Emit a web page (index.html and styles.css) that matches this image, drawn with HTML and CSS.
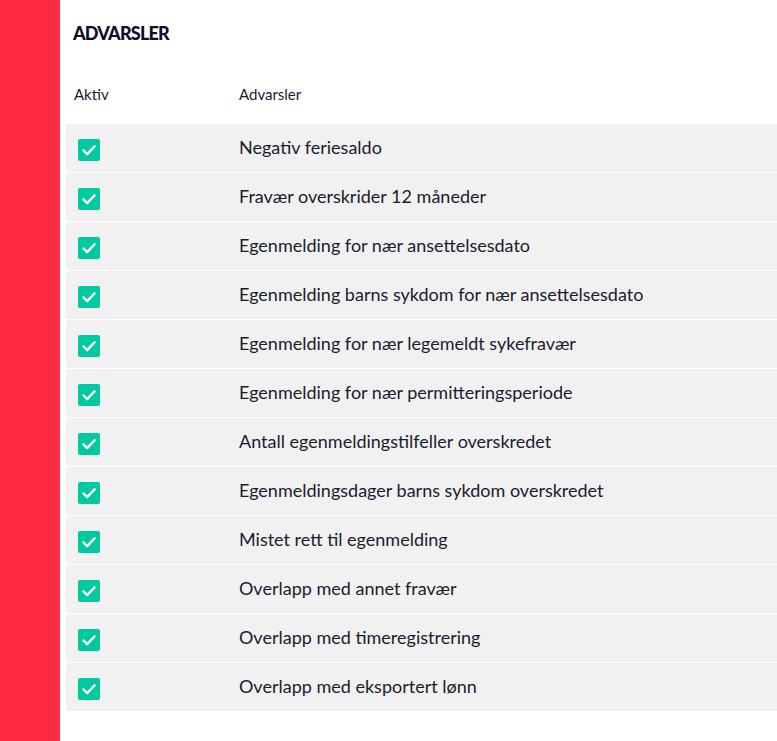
FILE: index.html
```html
<!DOCTYPE html>
<html lang="no">
<head>
  <meta charset="UTF-8">
  <meta name="viewport" content="width=device-width, initial-scale=1.0">
  <title>Advarsler</title>
  <link rel="stylesheet" href="styles.css">
</head>
<body>

  <div class="layout">
    <aside class="sidebar"></aside>

    <main class="content">
      <h1 class="title">ADVARSLER</h1>

      <div class="table">
        <div class="table-head">
          <span class="col-active">Aktiv</span>
          <span class="col-name">Advarsler</span>
        </div>

        <div class="table-row">
          <span class="col-active"><span class="check"><svg viewBox="0 0 24 24"><path d="M6 12.5l4 4 8-8.5"/></svg></span></span>
          <span class="col-name">Negativ feriesaldo</span>
        </div>
        <div class="table-row">
          <span class="col-active"><span class="check"><svg viewBox="0 0 24 24"><path d="M6 12.5l4 4 8-8.5"/></svg></span></span>
          <span class="col-name">Fravær overskrider 12 måneder</span>
        </div>
        <div class="table-row">
          <span class="col-active"><span class="check"><svg viewBox="0 0 24 24"><path d="M6 12.5l4 4 8-8.5"/></svg></span></span>
          <span class="col-name">Egenmelding for nær ansettelsesdato</span>
        </div>
        <div class="table-row">
          <span class="col-active"><span class="check"><svg viewBox="0 0 24 24"><path d="M6 12.5l4 4 8-8.5"/></svg></span></span>
          <span class="col-name">Egenmelding barns sykdom for nær ansettelsesdato</span>
        </div>
        <div class="table-row">
          <span class="col-active"><span class="check"><svg viewBox="0 0 24 24"><path d="M6 12.5l4 4 8-8.5"/></svg></span></span>
          <span class="col-name">Egenmelding for nær legemeldt sykefravær</span>
        </div>
        <div class="table-row">
          <span class="col-active"><span class="check"><svg viewBox="0 0 24 24"><path d="M6 12.5l4 4 8-8.5"/></svg></span></span>
          <span class="col-name">Egenmelding for nær permitteringsperiode</span>
        </div>
        <div class="table-row">
          <span class="col-active"><span class="check"><svg viewBox="0 0 24 24"><path d="M6 12.5l4 4 8-8.5"/></svg></span></span>
          <span class="col-name">Antall egenmeldingstilfeller overskredet</span>
        </div>
        <div class="table-row">
          <span class="col-active"><span class="check"><svg viewBox="0 0 24 24"><path d="M6 12.5l4 4 8-8.5"/></svg></span></span>
          <span class="col-name">Egenmeldingsdager barns sykdom overskredet</span>
        </div>
        <div class="table-row">
          <span class="col-active"><span class="check"><svg viewBox="0 0 24 24"><path d="M6 12.5l4 4 8-8.5"/></svg></span></span>
          <span class="col-name">Mistet rett til egenmelding</span>
        </div>
        <div class="table-row">
          <span class="col-active"><span class="check"><svg viewBox="0 0 24 24"><path d="M6 12.5l4 4 8-8.5"/></svg></span></span>
          <span class="col-name">Overlapp med annet fravær</span>
        </div>
        <div class="table-row">
          <span class="col-active"><span class="check"><svg viewBox="0 0 24 24"><path d="M6 12.5l4 4 8-8.5"/></svg></span></span>
          <span class="col-name">Overlapp med timeregistrering</span>
        </div>
        <div class="table-row">
          <span class="col-active"><span class="check"><svg viewBox="0 0 24 24"><path d="M6 12.5l4 4 8-8.5"/></svg></span></span>
          <span class="col-name">Overlapp med eksportert lønn</span>
        </div>
      </div>
    </main>
  </div>

</body>
</html>
```

FILE: styles.css
```css
* {
  box-sizing: border-box;
}

body {
  font-family: 'Lato', 'Noto Sans', sans-serif;
  color: #1b1b30;
  background-color: #fff;
  margin: 0;
  padding: 0;
  overflow: hidden;
}

.layout {
  display: flex;
  min-height: 100vh;
}

.sidebar {
  flex: 0 0 60px;
  background-color: #ff2b44;
}

.content {
  flex: 1;
  min-width: 0;
  padding-left: 6px;
  overflow: hidden;
}

.title {
  margin: 0;
  padding: 22px 0 0 7px;
  font-size: 18px;
  line-height: 22px;
  font-weight: 900;
  color: #0e0e2c;
  letter-spacing: -0.8px;
}

.table {
  width: 820px;
  margin-top: 41px;
  display: flex;
  flex-direction: column;
  gap: 1px;
}

.table-head {
  display: flex;
  align-items: center;
  font-size: 15px;
  line-height: 18px;
  padding-bottom: 20px;
}

.table-head .col-active {
  padding-left: 8px;
}

.table-row {
  display: flex;
  align-items: center;
  height: 48px;
  background-color: #f1f1f1;
  border-radius: 3px;
  font-size: 18px;
}

.col-active {
  flex: 0 0 173px;
}

.table-row .col-active {
  padding-left: 12px;
  padding-top: 4px;
}

.table-row .col-name {
  padding-bottom: 2px;
}

.check {
  display: block;
  width: 22px;
  height: 22px;
  border-radius: 2px;
  background-color: #00c9a0;
}

.check svg {
  display: block;
  width: 22px;
  height: 22px;
  fill: none;
  stroke: #fff;
  stroke-width: 2.6;
  stroke-linecap: round;
  stroke-linejoin: round;
}

.col-name {
  white-space: nowrap;
}
```
